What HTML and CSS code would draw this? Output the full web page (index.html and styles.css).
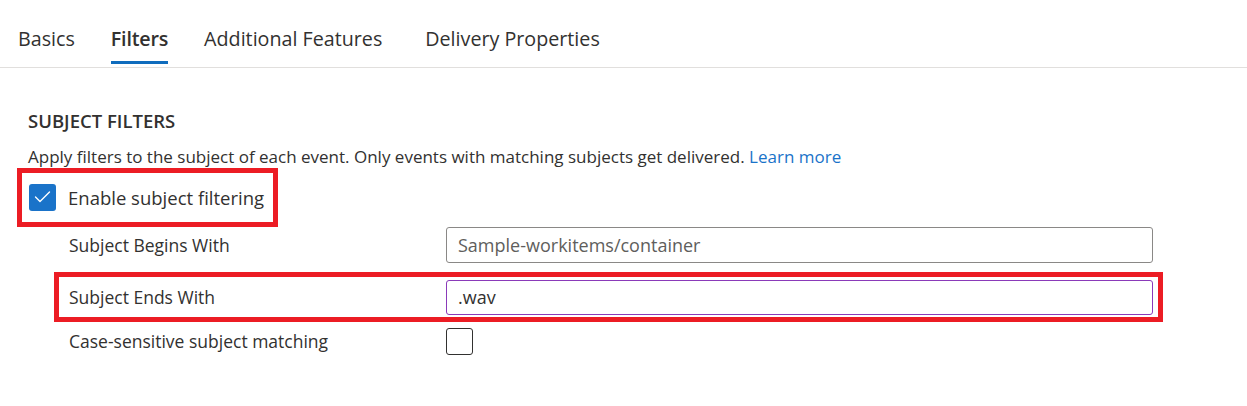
FILE: index.html
```html
<!DOCTYPE html>
<html lang="en">
<head>
<meta charset="utf-8">
<title>Event subscription filters</title>
<link rel="stylesheet" href="styles.css">
</head>
<body>
  <nav class="tabs">
    <a class="tab">Basics</a>
    <a class="tab active">Filters</a>
    <a class="tab">Additional Features</a>
    <a class="tab">Delivery Properties</a>
  </nav>
  <main class="content">
    <h2 class="section-title">SUBJECT FILTERS</h2>
    <p class="desc">Apply filters to the subject of each event. Only events with matching subjects get delivered. <a class="link">Learn more</a></p>
    <label class="enable highlight">
      <span class="checkbox checked">
        <svg width="27" height="27" viewBox="0 0 27 27"><path d="M6.5 13 L11 17.5 L20.5 8" fill="none" stroke="#fff" stroke-width="1.4" stroke-linecap="round" stroke-linejoin="round"/></svg>
      </span>
      <span class="enable-text">Enable subject filtering</span>
    </label>
    <div class="form">
      <div class="row">
        <span class="label">Subject Begins With</span>
        <div class="input placeholder">Sample-workitems/container</div>
      </div>
      <div class="row highlight boxed">
        <span class="label">Subject Ends With</span>
        <div class="input focused">.wav</div>
      </div>
      <div class="row last">
        <span class="label">Case-sensitive subject matching</span>
        <span class="checkbox"></span>
      </div>
    </div>
  </main>
</body>
</html>
```

FILE: styles.css
```css
* { box-sizing: border-box; }
html, body { margin: 0; padding: 0; background: #fff; }
body {
  font-family: "Open Sans", "Noto Sans", sans-serif;
  color: #323130;
  width: 1247px;
  height: 406px;
  overflow: hidden;
}
.tabs {
  display: flex;
  height: 68px;
  border-bottom: 1px solid #e1dfdd;
  padding-left: 18px;
  gap: 36px;
  align-items: stretch;
}
.tab {
  font-size: 19.7px;
  color: #323130;
  display: flex;
  align-items: center;
  padding-top: 10px;
  position: relative;
}
.tab:nth-child(4) { margin-left: 7px; }
.tab.active { font-weight: 600; letter-spacing: -0.2px; }
.tab.active::after {
  content: "";
  position: absolute;
  left: 0; right: 0;
  bottom: 3px;
  height: 3px;
  background: #0f6cbd;
}
.content { padding-left: 28px; }
.section-title {
  margin: 42px 0 0;
  font-size: 18.5px;
  font-weight: 600;
  line-height: 22px;
}
.desc {
  margin: 14px 0 0;
  font-size: 17px;
  line-height: 22px;
}
.link { color: #1a73c9; }
.highlight { border: 5px solid #ec1c24; }
.enable {
  display: flex;
  width: fit-content;
  align-items: center;
  margin: 0 0 0 -11px;
  padding: 11px 9px 11px 7px;
  gap: 12px;
  height: 59px;
}
.enable-text { font-size: 18.5px; line-height: 22px; }
.checkbox {
  width: 27px;
  height: 27px;
  border: 1.5px solid #323130;
  border-radius: 3px;
  display: block;
  flex: none;
}
.checkbox.checked { background: #1a73c9; border: none; }
.checkbox svg { display: block; }
.form { margin-left: 41px; }
.row {
  display: grid;
  grid-template-columns: 377px 707px;
  align-items: center;
  height: 36px;
}
.row.boxed {
  height: 50px;
  margin: 9px 0 0 -15px;
  padding: 0 5px 0 10px;
  width: 1109px;
}
.row.last { margin-top: 1px; }
.label { font-size: 17.5px; }
.input {
  height: 36px;
  border: 1px solid #8a8886;
  border-radius: 3px;
  padding: 0 11px;
  display: flex;
  align-items: center;
  font-size: 18px;
  color: #323130;
}
.input.placeholder { color: #605e5c; }
.input.focused { border-color: #8a3ab9; height: 35px; }
```
